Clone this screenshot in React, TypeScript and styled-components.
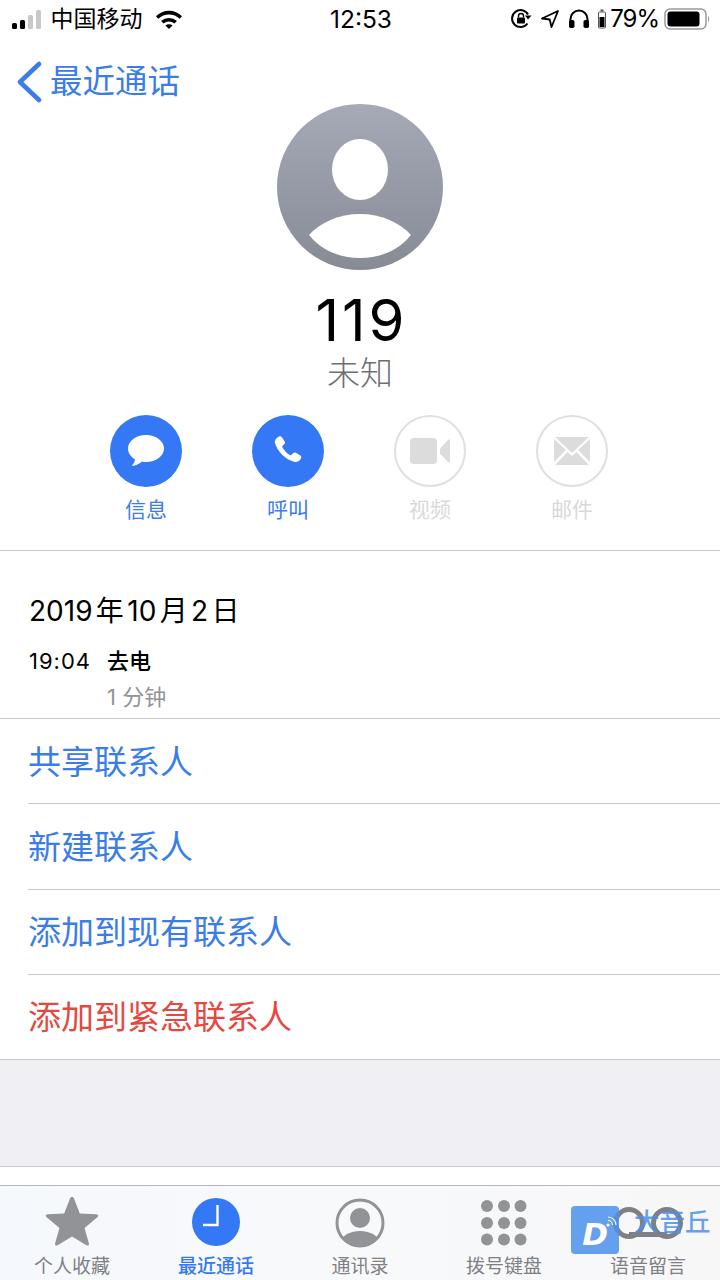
import React from 'react'
import styled, { createGlobalStyle } from 'styled-components'

const Blue = '#3478f6'
const LinkBlue = '#3a7de8'
const Line = '#c8c8cc'
const Gray = '#929396'

const Global = createGlobalStyle`
  html, body {
    margin: 0;
    padding: 0;
    background: #fff;
  }
  body {
    font-family: Inter, "Noto Sans CJK SC", "Liberation Sans", sans-serif;
    color: #000;
  }
`

export default function App() {
  return (
    <Page>
      <Global />
      <StatusBar>
        <StatusLeft>
          <Signal>
            <Bar $h={6} $on />
            <Bar $h={9} $on />
            <Bar $h={14} />
            <Bar $h={19} />
          </Signal>
          <Carrier>中国移动</Carrier>
          <WifiIcon />
        </StatusLeft>
        <Clock>12:53</Clock>
        <StatusRight>
          <LockIcon />
          <LocationIcon />
          <HeadphoneIcon />
          <MiniBattery />
          <Percent>79%</Percent>
          <BatteryIcon />
        </StatusRight>
      </StatusBar>

      <NavBar>
        <BackChevron />
        <BackLabel>最近通话</BackLabel>
      </NavBar>

      <Profile>
        <Avatar />
        <Number>119</Number>
        <Subtitle>未知</Subtitle>
        <Actions>
          <Action>
            <ActionCircle $active>
              <MessageIcon />
            </ActionCircle>
            <ActionLabel $active>信息</ActionLabel>
          </Action>
          <Action>
            <ActionCircle $active>
              <PhoneIcon />
            </ActionCircle>
            <ActionLabel $active>呼叫</ActionLabel>
          </Action>
          <Action>
            <ActionCircle>
              <VideoIcon />
            </ActionCircle>
            <ActionLabel>视频</ActionLabel>
          </Action>
          <Action>
            <ActionCircle>
              <MailIcon />
            </ActionCircle>
            <ActionLabel>邮件</ActionLabel>
          </Action>
        </Actions>
      </Profile>

      <History>
        <DateLine>2019 年 10 月 2 日</DateLine>
        <CallRow>
          <CallTime>19:04</CallTime>
          <CallType>去电</CallType>
        </CallRow>
        <CallLength>1 分钟</CallLength>
      </History>

      <ActionList>
        <ListRow>共享联系人</ListRow>
        <ListRow>新建联系人</ListRow>
        <ListRow>添加到现有联系人</ListRow>
        <ListRow $danger>添加到紧急联系人</ListRow>
      </ActionList>

      <GroupGap />
      <WhiteStrip />

      <TabBar>
        <Tab>
          <StarIcon />
          <TabLabel>个人收藏</TabLabel>
        </Tab>
        <Tab>
          <ClockIcon />
          <TabLabel $active>最近通话</TabLabel>
        </Tab>
        <Tab>
          <ContactIcon />
          <TabLabel>通讯录</TabLabel>
        </Tab>
        <Tab>
          <KeypadIcon />
          <TabLabel>拨号键盘</TabLabel>
        </Tab>
        <Tab>
          <VoicemailIcon />
          <TabLabel>语音留言</TabLabel>
        </Tab>
        <Watermark>
          <WatermarkBadge>
            <WatermarkD>D</WatermarkD>
            <WatermarkWaves />
          </WatermarkBadge>
          <WatermarkText>大音丘</WatermarkText>
        </Watermark>
      </TabBar>
    </Page>
  )
}

function WifiIcon() {
  return (
    <svg width="28" height="22" viewBox="0 0 30 22">
      <path d="M1 8a20 20 0 0 1 28 0l-2.6 2.7a16.300 16.300 0 0 0-22.800 0z" fill="#000" />
      <path d="M6.500 13.200a12.500 12.500 0 0 1 17 0l-2.700 2.700a8.700 8.700 0 0 0-11.600 0z" fill="#000" />
      <path d="M11.200 18a5.600 5.600 0 0 1 7.600 0L15 21.800z" fill="#000" />
    </svg>
  )
}

function LockIcon() {
  return (
    <svg width="22" height="22" viewBox="0 0 22 22">
      <path d="M17.500 15.500A8.500 8.500 0 1 1 18 6.500" fill="none" stroke="#000" strokeWidth="2" />
      <path d="M15 7.500h6.500L18 11.500z" fill="#000" />
      <rect x="7" y="9.500" width="8" height="6" rx="1" fill="#000" />
      <path d="M8.500 9.500V8a2.500 2.500 0 0 1 5 0v1.500" fill="none" stroke="#000" strokeWidth="1.400" />
    </svg>
  )
}

function LocationIcon() {
  return (
    <svg width="20" height="20" viewBox="0 0 20 20">
      <path d="M18 2 2 9.500l7.700 1 1.800 7.500z" fill="none" stroke="#000" strokeWidth="1.800" strokeLinejoin="round" />
    </svg>
  )
}

function HeadphoneIcon() {
  return (
    <svg width="22" height="20" viewBox="0 0 22 20">
      <path d="M2.500 15V10a8.500 8.500 0 0 1 17 0v5" fill="none" stroke="#000" strokeWidth="2" />
      <rect x="1" y="11" width="5.500" height="8" rx="1.800" fill="#000" />
      <rect x="15.500" y="11" width="5.500" height="8" rx="1.800" fill="#000" />
    </svg>
  )
}

function MiniBattery() {
  return (
    <svg width="8" height="20" viewBox="0 0 8 20">
      <rect x="0.500" y="3" width="7" height="16" rx="1" fill="none" stroke="#555" />
      <rect x="2.500" y="0.500" width="3" height="2" fill="#555" />
      <rect x="1.500" y="8" width="5" height="10" fill="#000" />
    </svg>
  )
}

function BatteryIcon() {
  return (
    <svg width="46" height="22" viewBox="0 0 46 22">
      <rect x="1" y="1" width="41" height="20" rx="5" fill="none" stroke="#999" strokeWidth="1.500" />
      <rect x="3.500" y="3.500" width="32" height="15" rx="3" fill="#000" />
      <path d="M44 8c1.500.6 1.500 5.400 0 6z" fill="#999" />
    </svg>
  )
}

function BackChevron() {
  return (
    <svg width="26" height="42" viewBox="0 0 26 42">
      <path d="M23 3 4 21l19 18" fill="none" stroke={LinkBlue} strokeWidth="4.500" strokeLinecap="round" strokeLinejoin="round" />
    </svg>
  )
}

function Avatar() {
  return (
    <svg width="166" height="166" viewBox="0 0 166 166">
      <defs>
        <linearGradient id="avatar" x1="0" y1="0" x2="0" y2="1">
          <stop offset="0" stopColor="#a6a9b6" />
          <stop offset="1" stopColor="#868b96" />
        </linearGradient>
      </defs>
      <circle cx="83" cy="83" r="83" fill="url(#avatar)" />
      <ellipse cx="83" cy="65.500" rx="28" ry="30.500" fill="#fff" />
      <path d="M32 131c12-13 30-21 51-21s39 8 51 21c-12 15-30 23-51 23s-39-8-51-23z" fill="#fff" />
    </svg>
  )
}

function MessageIcon() {
  return (
    <svg width="38" height="34" viewBox="0 0 38 34">
      <path d="M19 1c10 0 18 6 18 13.500S29 28 19 28c-1.500 0-2.500 0-4-.5-2.500 2-5.500 4-9 4.500-.8 0-1-.6-.5-1.200 1.200-1.300 2.200-3 2.500-5.300C4 23 1 19 1 14.500 1 7 9 1 19 1z" fill="#fff" />
    </svg>
  )
}

function PhoneIcon() {
  return (
    <svg width="32" height="32" viewBox="0 0 32 32">
      <path d="M7 1.500c1-.6 2-.3 2.700.6l3 4.500c.5.900.4 1.800-.3 2.500l-2 1.800c-.3.300-.3.600-.1 1 1.800 3.600 4.500 6.400 8 8.300.4.200.8.200 1-.1l2-2c.7-.7 1.600-.8 2.500-.3l4.500 2.800c1 .6 1.300 1.800.7 2.800-1.300 2.500-3.800 4-6.300 3.500C13 24.500 5.500 16.500 3 8c-.6-2.800 1.500-5.300 4-6.500z" fill="#fff" />
    </svg>
  )
}

function VideoIcon() {
  return (
    <svg width="40" height="28" viewBox="0 0 40 28">
      <rect x="0" y="1" width="27" height="26" rx="4" fill="#dcdcdc" />
      <path d="M30 11.500 38 3c.8-.8 2-.3 2 .8v20.400c0 1.100-1.200 1.600-2 .8l-8-8.500z" fill="#dcdcdc" />
    </svg>
  )
}

function MailIcon() {
  return (
    <svg width="36" height="28" viewBox="0 0 36 28">
      <path d="M1 0h34L18 16z" fill="#dcdcdc" />
      <path d="M0 2v23l12-12zM36 2v23L24 13zM13.500 15 18 19l4.500-4L35 28H1z" fill="#dcdcdc" />
    </svg>
  )
}

const StarSvg = styled.svg`
  margin-top: -2px;
`

function StarIcon() {
  return (
    <StarSvg width="54" height="50" viewBox="0 0 54 50">
      <path d="M27 1c1 0 1.700.6 2.100 1.700l5.700 14.800 16.200.8c2.500.1 3 1.700 1.100 3.200L39.500 32l4.300 15c.6 2.300-.8 3.200-2.800 1.900L27 40.500 13 48.900c-2 1.300-3.400.4-2.800-1.900l4.300-15L1.900 21.500C0 20 .5 18.400 3 18.300l16.200-.8 5.700-14.800C25.300 1.600 26 1 27 1z" fill={Gray} />
    </StarSvg>
  )
}

function ClockIcon() {
  return (
    <svg width="48" height="48" viewBox="0 0 48 48">
      <circle cx="24" cy="24" r="24" fill={Blue} />
      <path d="M25.500 7v20H11" fill="none" stroke="#fff" strokeWidth="2.400" />
    </svg>
  )
}

function ContactIcon() {
  return (
    <svg width="50" height="50" viewBox="0 0 50 50">
      <defs>
        <clipPath id="contact">
          <circle cx="25" cy="25" r="22.500" />
        </clipPath>
      </defs>
      <circle cx="25" cy="25" r="23" fill="none" stroke={Gray} strokeWidth="3" />
      <circle cx="25" cy="20" r="10" fill={Gray} />
      <ellipse cx="25" cy="46" rx="20" ry="13" fill={Gray} clipPath="url(#contact)" />
    </svg>
  )
}

function KeypadIcon() {
  const dots = [8, 25, 41.500]
  return (
    <svg width="50" height="50" viewBox="0 0 50 50">
      {dots.map(cy => dots.map(cx => <circle key={`${cx}-${cy}`} cx={cx} cy={cy} r="6" fill={Gray} />))}
    </svg>
  )
}

function VoicemailIcon() {
  return (
    <svg width="72" height="50" viewBox="0 0 72 50">
      <circle cx="17" cy="25" r="13.500" fill="none" stroke="#7f8083" strokeWidth="5" />
      <circle cx="55" cy="25" r="13.500" fill="none" stroke="#7f8083" strokeWidth="5" />
      <path d="M17 36.500h38" stroke="#7f8083" strokeWidth="5" />
    </svg>
  )
}

const WavesSvg = styled.svg`
  position: absolute;
  right: 1px;
  top: 9px;
`

function WatermarkWaves() {
  return (
    <WavesSvg width="13" height="13" viewBox="0 0 13 13">
      <circle cx="3" cy="10" r="1.600" fill="#fff" />
      <path d="M3 5.500a4.500 4.500 0 0 1 4.500 4.500M3 2a8 8 0 0 1 8 8" fill="none" stroke="#fff" strokeWidth="1.100" />
    </WavesSvg>
  )
}

const Page = styled.div`
  width: 720px;
  height: 1280px;
  display: flex;
  flex-direction: column;
  overflow: hidden;
  background: #fff;
`

const StatusBar = styled.div`
  height: 40px;
  padding: 0 10px 2px 12px;
  box-sizing: border-box;
  display: grid;
  grid-template-columns: 1fr auto 1fr;
  align-items: center;
`

const StatusLeft = styled.div`
  display: flex;
  align-items: center;
`

const Signal = styled.div`
  display: flex;
  align-items: flex-end;
  gap: 3.500px;
  height: 20px;
  margin-right: 10px;
`

const Bar = styled.span<{ $h: number; $on?: boolean }>`
  width: 4.500px;
  height: ${p => p.$h}px;
  border-radius: 1.500px;
  background: ${p => (p.$on ? '#000' : '#c8c8c8')};
`

const Carrier = styled.span`
  font-size: 23px;
  line-height: 30px;
  margin-right: 12px;
`

const Clock = styled.span`
  font-size: 24.500px;
  line-height: 30px;
`

const StatusRight = styled.div`
  display: flex;
  align-items: center;
  justify-content: flex-end;
  gap: 8px;
`

const Percent = styled.span`
  font-size: 24px;
  line-height: 30px;
  letter-spacing: -1px;
  margin: 0 -3px 0 -4px;
`

const NavBar = styled.div`
  height: 64px;
  padding: 20px 0 0 16px;
  box-sizing: border-box;
  display: flex;
  align-items: center;
  gap: 8px;
`

const BackLabel = styled.span`
  font-size: 32.500px;
  line-height: 42px;
  color: ${LinkBlue};
`

const Profile = styled.div`
  height: 446px;
  border-bottom: 1px solid ${Line};
  display: flex;
  flex-direction: column;
  align-items: center;
`

const Number = styled.div`
  margin-top: 14px;
  padding-left: 3px;
  font-size: 58px;
  line-height: 72px;
  letter-spacing: 3px;
`

const Subtitle = styled.div`
  font-size: 33px;
  line-height: 38px;
  font-weight: 300;
  color: #6f6f72;
  margin-top: -2px;
`

const Actions = styled.div`
  margin-top: 23px;
  padding-right: 2px;
  display: flex;
  gap: 70px;
`

const Action = styled.div`
  width: 72px;
  display: flex;
  flex-direction: column;
  align-items: center;
`

const ActionCircle = styled.div<{ $active?: boolean }>`
  width: 72px;
  height: 72px;
  box-sizing: border-box;
  border-radius: 50%;
  display: flex;
  align-items: center;
  justify-content: center;
  background: ${p => (p.$active ? Blue : '#fff')};
  border: ${p => (p.$active ? 'none' : '2px solid #e0e0e0')};
`

const ActionLabel = styled.div<{ $active?: boolean }>`
  margin-top: 8px;
  font-size: 21px;
  line-height: 30px;
  color: ${p => (p.$active ? LinkBlue : '#d9d9d9')};
`

const History = styled.div`
  height: 167px;
  padding: 41px 0 0 29px;
  box-sizing: border-box;
  display: flex;
  flex-direction: column;
`

const DateLine = styled.div`
  font-size: 28px;
  line-height: 38px;
  word-spacing: -4.500px;
`

const CallRow = styled.div`
  display: flex;
  align-items: center;
  margin-top: 16px;
  font-size: 22px;
  line-height: 30px;
`

const CallTime = styled.span`
  width: 78px;
  letter-spacing: 1px;
`

const CallType = styled.span`
  font-weight: 500;
`

const CallLength = styled.div`
  margin: 6px 0 0 78px;
  font-size: 22px;
  line-height: 30px;
  color: #929396;
`

const ActionList = styled.div`
  padding-left: 28px;
  height: 342px;
  border-top: 1px solid ${Line};
  border-bottom: 1px solid ${Line};
  box-sizing: border-box;
  display: flex;
  flex-direction: column;
`

const ListRow = styled.div<{ $danger?: boolean }>`
  flex: 1;
  display: flex;
  align-items: center;
  padding-bottom: 3px;
  font-size: 33px;
  color: ${p => (p.$danger ? '#e5483f' : LinkBlue)};

  &:not(:last-child) {
    border-bottom: 1px solid ${Line};
  }
`

const GroupGap = styled.div`
  height: 106px;
  background: #f0f0f4;
  border-bottom: 1px solid ${Line};
`

const WhiteStrip = styled.div`
  height: 18px;
`

const TabBar = styled.div`
  position: relative;
  flex: 1;
  display: flex;
  justify-content: space-between;
  padding: 12px 0 0 0;
  border-top: 1px solid #b8b8bc;
  background: linear-gradient(90deg, #f5f8fc 0%, #f8f9fb 50%, #f7f7f8 100%);
`

const Tab = styled.div`
  width: 144px;
  height: 81px;
  display: flex;
  flex-direction: column;
  align-items: center;
  justify-content: space-between;
`

const TabLabel = styled.div<{ $active?: boolean }>`
  font-size: 19px;
  line-height: 24px;
  font-weight: ${p => (p.$active ? 500 : 400)};
  color: ${p => (p.$active ? Blue : '#7f8083')};
`

const Watermark = styled.div`
  position: absolute;
  left: 571px;
  top: 20px;
  display: flex;
  align-items: flex-start;
  gap: 15px;
`

const WatermarkBadge = styled.div`
  position: relative;
  width: 48px;
  height: 48px;
  border-radius: 4px;
  background: rgba(74, 144, 236, 0.85);
  display: flex;
  align-items: flex-end;
  justify-content: center;
`

const WatermarkD = styled.span`
  font-family: "DejaVu Sans", sans-serif;
  font-size: 31px;
  line-height: 40px;
  font-weight: 700;
  font-style: italic;
  color: #fff;
`

const WatermarkText = styled.span`
  font-size: 25.500px;
  line-height: 32px;
  font-weight: 500;
  color: rgba(74, 144, 236, 0.85);
`
